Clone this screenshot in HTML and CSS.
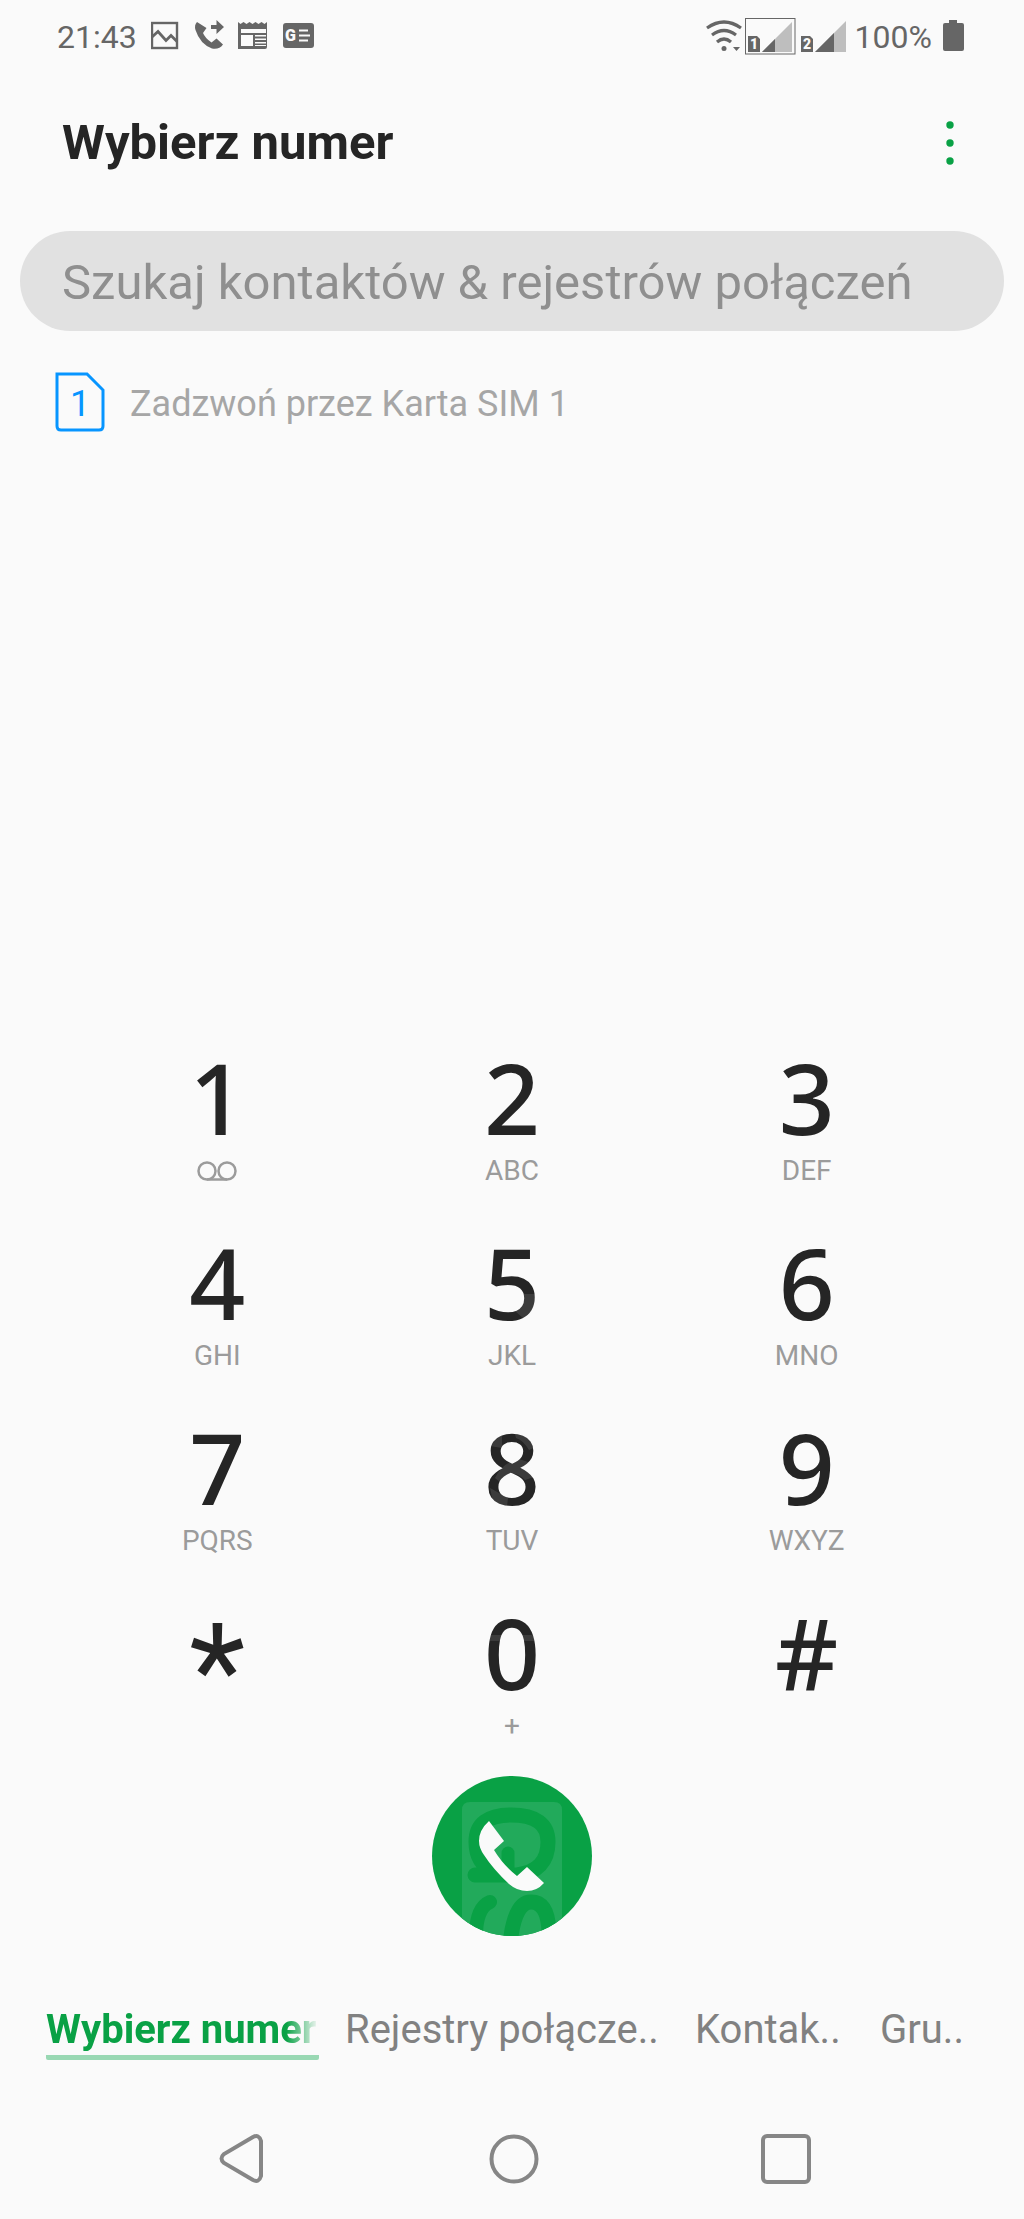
FILE: index.html
```html
<!DOCTYPE html>
<html lang="pl">
<head>
  <meta charset="UTF-8">
  <meta name="viewport" content="width=device-width, initial-scale=1">
  <title>Wybierz numer</title>
  <link rel="stylesheet" href="styles.css">
</head>
<body>
  <div class="status-bar">
    <div class="status-left">
      <span>21:43</span>
      <svg width="28" height="36" viewBox="150 19 28 36">
        <rect x="151" y="23" width="25" height="25" fill="none" stroke="#666" stroke-width="2.4"/>
        <path d="M151 37l6-5.500 8 9 5-5 6 6" fill="none" stroke="#666" stroke-width="2.8"/>
      </svg>
      <svg width="31" height="36" viewBox="192 19 31 36">
        <path d="M196 22q-3 3-1.500 8Q199 44 211 48.500q7 1.500 11-4l-6.500-6-5 4Q204 38 202 33l3.500-5z" fill="#666"/>
        <path d="M210 25h5.500v-5l7.500 7-7.500 7v-5H210z" fill="#666"/>
      </svg>
      <svg width="31" height="36" viewBox="237 19 31 36">
        <path d="M237 22l2.500 2 3-2 3 2 3-2 3 2 3-2 3 2 3-2 3 2 2.500-2v25q0 2-2 2h-27q-2 0-2-2z" fill="#666"/>
        <path d="M240 29h25v4h-25zM240 35h12v11h-12zM254 35h11v1.500h-11zM254 38.500h11v1.500h-11zM254 42h11v1.500h-11zM254 45h11v1h-11z" fill="#fafafa"/>
      </svg>
      <svg width="32" height="36" viewBox="282 19 32 36">
        <rect x="282" y="23" width="31" height="25" rx="3" fill="#666"/>
        <text x="284" y="41" class="badge-text">G</text>
        <path d="M298 30.500h9M298 35.500h11M298 40.500h9" stroke="#fafafa" stroke-width="2.200"/>
      </svg>
    </div>
    <div class="status-right">
      <div class="signals">
        <svg width="37" height="36" viewBox="704 19 37 36">
          <g fill="none" stroke="#666" stroke-width="3.2">
            <path d="M706 28q17-12 34 0"/>
            <path d="M711 35q12-9 24 0"/>
            <path d="M716 42q7-6 14 0"/>
          </g>
          <circle cx="723" cy="48.500" r="2.500" fill="#666"/>
          <path d="M732 47h7l-3.500 4z" fill="#666"/>
        </svg>
        <svg width="51" height="38" viewBox="744 17 51 38">
          <rect x="744.500" y="17.500" width="49.500" height="35.500" fill="none" stroke="#666"/>
          <path d="M761 51l30-30v30z" fill="#bebebe"/>
          <path d="M761 51l13-13v13z" fill="#666"/>
          <path d="M747 35h9l3 3v13h-12z" fill="#666"/>
          <text x="749" y="48" class="sim-text">1</text>
        </svg>
        <svg width="47" height="38" viewBox="798 17 47 38">
          <path d="M814 51l31-31v31z" fill="#bebebe"/>
          <path d="M814 51l19-19v19z" fill="#666"/>
          <path d="M800 35h9l3 3v13h-12z" fill="#666"/>
          <text x="802" y="48" class="sim-text">2</text>
        </svg>
      </div>
      <span>100%</span>
      <svg width="23" height="36" viewBox="940 19 23 36">
        <path d="M948 20h8v3h5q2 0 2 2v24q0 2-2 2h-17q-2 0-2-2V25q0-2 2-2h4z" fill="#666"/>
      </svg>
    </div>
  </div>

  <header class="header">
    <h1>Wybierz numer</h1>
    <button class="menu-btn" type="button" aria-label="Więcej opcji">
      <svg width="10" height="44" viewBox="0 0 10 44">
        <circle cx="5" cy="4" r="3.700"/>
        <circle cx="5" cy="22" r="3.700"/>
        <circle cx="5" cy="40" r="3.700"/>
      </svg>
    </button>
  </header>

  <form class="search">
    <input type="text" aria-label="Szukaj" placeholder="Szukaj kontaktów &amp; rejestrów połączeń">
  </form>

  <div class="sim">
    <svg width="50" height="60" viewBox="0 0 50 60">
      <path d="M2 2h30l16 16v36q0 4-4 4H6q-4 0-4-4z" fill="none" stroke="#0795ff" stroke-width="3"/>
      <text x="25" y="44" text-anchor="middle">1</text>
    </svg>
    <span>Zadzwoń przez Karta SIM 1</span>
  </div>

  <main class="dialer">
    <div class="keypad">
      <button class="key" type="button">
        <span class="digit">1</span>
        <span class="letters">
          <svg width="40" height="20" viewBox="0 0 40 20" fill="none" stroke="#9b9b9b" stroke-width="2.5">
            <circle cx="10" cy="10" r="8.500"/>
            <circle cx="30" cy="10" r="8.500"/>
            <path d="M10 18.500h20"/>
          </svg>
        </span>
      </button>
      <button class="key" type="button"><span class="digit">2</span><span class="letters">ABC</span></button>
      <button class="key" type="button"><span class="digit">3</span><span class="letters">DEF</span></button>
      <button class="key" type="button"><span class="digit">4</span><span class="letters">GHI</span></button>
      <button class="key" type="button"><span class="digit">5</span><span class="letters">JKL</span></button>
      <button class="key" type="button"><span class="digit">6</span><span class="letters">MNO</span></button>
      <button class="key" type="button"><span class="digit">7</span><span class="letters">PQRS</span></button>
      <button class="key" type="button"><span class="digit">8</span><span class="letters">TUV</span></button>
      <button class="key" type="button"><span class="digit">9</span><span class="letters">WXYZ</span></button>
      <button class="key" type="button"><span class="digit star">*</span></button>
      <button class="key" type="button"><span class="digit">0</span><span class="letters">+</span></button>
      <button class="key" type="button"><span class="digit">#</span></button>

      <!-- faint logo strip over the middle column -->
      <svg class="strip" width="100" height="694" viewBox="461 1048 100 694" fill="#fff">
        <path d="M523 1294h12v14l-13 10-8-7q9-6 9-17z"/>
        <path d="M489 1446l12-16v18zM513 1430l10-1 12 18-7 3q-6-10-13-12z"/>
        <path d="M494 1478q8-16 24-19l9 3 9 14-12 4q-14-14-25 2zM489 1488l18 10-1 8-14-4z"/>
        <path d="M485 1616h54v3h-54zM485 1635h54v6h-54z"/>
      </svg>
    </div>

    <button class="call-btn" type="button" aria-label="Zadzwoń">
      <svg width="160" height="160" viewBox="0 0 160 160">
        <path d="M30 160V34q0-8 8-8h84q8 0 8 8v126z" fill="#22aa5b"/>
        <g fill="none" stroke="#09a145" stroke-linecap="round">
          <path d="M43 99h42q31-4 31-33 0-27-37-27-35 0-35 27 0 21 18 30" stroke-width="15"/>
          <path d="M76 95V77" stroke-width="13"/>
          <path d="M44 160q0-28 14-34" stroke-width="14"/>
          <path d="M79 160q5-34 20-34 17 0 18 30" stroke-width="15"/>
        </g>
        <path d="M57 45q-10 9-10 20 0 7 5 14 9 14 25 29 8 7 18 7 10 0 17-8L95 91l-10 9Q71 89 62 74l10-9z" fill="#fafafa"/>
      </svg>
    </button>
  </main>

  <nav class="tabs">
    <a href="#" class="tab active"><span>Wybierz numer</span></a>
    <a href="#" class="tab">Rejestry połącze..</a>
    <a href="#" class="tab">Kontak..</a>
    <a href="#" class="tab">Gru..</a>
  </nav>

  <div class="nav-bar">
    <button type="button" aria-label="Wstecz">
      <svg width="50" height="50" viewBox="0 0 50 50"><path d="M36 3L7 20q-5 4.500 0 9l29 17q6 3 8-4V7q-2-7-8-4z"/></svg>
    </button>
    <button type="button" aria-label="Ekran główny">
      <svg width="50" height="50" viewBox="0 0 50 50"><circle cx="25" cy="25" r="22.500"/></svg>
    </button>
    <button type="button" aria-label="Ostatnie">
      <svg width="50" height="50" viewBox="0 0 50 50"><rect x="2" y="2" width="46" height="46" rx="4"/></svg>
    </button>
  </div>
</body>
</html>
```
FILE: styles.css
```css
* {
  box-sizing: border-box;
}

body {
  margin: 0;
  min-height: 100vh;
  display: flex;
  flex-direction: column;
  background-color: #fafafa;
  font-family: Roboto, "Liberation Sans", sans-serif;
  color: #252525;
}

button {
  padding: 0;
  border: none;
  background: none;
  font-family: inherit;
  color: inherit;
  cursor: pointer;
}

svg {
  display: block;
}

/* status bar */
.status-bar {
  display: flex;
  justify-content: space-between;
  height: 74px;
  padding: 0 60px 0 57px;
  font-size: 32px;
  color: #666;
}

.status-left,
.status-right,
.signals {
  display: flex;
  align-items: center;
}

.status-left {
  gap: 14px;
}

.status-right {
  gap: 9px;
}

.signals {
  gap: 3px;
}

.badge-text,
.sim-text {
  font-size: 16px;
  font-weight: 900;
  fill: #fafafa;
}

.sim-text {
  font-size: 14px;
}

/* header */
.header {
  display: flex;
  align-items: center;
  justify-content: space-between;
  padding: 41px 69px 0 62px;
}

.header h1 {
  margin: 0;
  font-size: 49px;
  line-height: 56px;
}

.menu-btn svg {
  fill: #09a145;
}

.search {
  margin: 60px 20px 0;
}

.search input {
  display: block;
  width: 100%;
  height: 100px;
  padding: 2px 42px 0;
  border: none;
  border-radius: 50px;
  background-color: #e1e1e1;
  font-family: inherit;
  font-size: 49px;
}

.search input::placeholder {
  color: #8f8f8f;
  opacity: 1;
}

.sim {
  display: flex;
  align-items: flex-end;
  gap: 25px;
  padding: 41px 55px 0;
  font-size: 36px;
  line-height: 56px;
  color: #a6a6a6;
}

.sim text {
  fill: #0795ff;
}

/* keypad */
.dialer {
  display: flex;
  flex-direction: column;
  align-items: center;
  margin-top: auto;
}

.keypad {
  position: relative;
  display: grid;
  grid-template-columns: repeat(3, 1fr);
  row-gap: 46px;
  width: 100%;
  padding: 0 70px;
}

.key {
  display: flex;
  flex-direction: column;
  align-items: center;
  justify-content: flex-start;
  gap: 9px;
}

.digit {
  font-family: "Noto Sans", "Open Sans", sans-serif;
  font-size: 98px;
  font-weight: 500;
  line-height: 98px;
}

.digit.star {
  font-family: Roboto, sans-serif;
  font-size: 130px;
  font-weight: 400;
  line-height: 138px;
}

.letters {
  display: flex;
  align-items: center;
  height: 32px;
  font-size: 28px;
  line-height: 32px;
  color: #9b9b9b;
}

.strip {
  position: absolute;
  top: 0;
  left: calc(50% - 50px);
  opacity: 0.1;
  pointer-events: none;
}

.call-btn {
  width: 160px;
  height: 160px;
  margin-top: 34px;
  border-radius: 50%;
  background-color: #09a145;
  overflow: hidden;
}

/* tabs */
.tabs {
  display: grid;
  grid-template-columns: 273fr 324fr 159fr 98fr;
  gap: 26px;
  margin-top: 70px;
  padding: 0 46px;
}

.tab {
  overflow: hidden;
  font-size: 40px;
  line-height: 48px;
  white-space: nowrap;
  text-decoration: none;
  color: #818181;
}

.tab.active {
  padding-bottom: 1px;
  border-bottom: 5px solid #99d8b3;
  border-radius: 2px;
  font-weight: bold;
  color: #09a145;
}

.tab.active span {
  display: block;
  overflow: hidden;
  -webkit-mask-image: linear-gradient(to right, #000 88%, transparent);
  mask-image: linear-gradient(to right, #000 88%, transparent);
}

/* system navigation */
.nav-bar {
  display: flex;
  justify-content: space-around;
  padding: 74px 102px 35px 106px;
}

.nav-bar svg {
  fill: none;
  stroke: #868686;
  stroke-width: 4;
}
```
